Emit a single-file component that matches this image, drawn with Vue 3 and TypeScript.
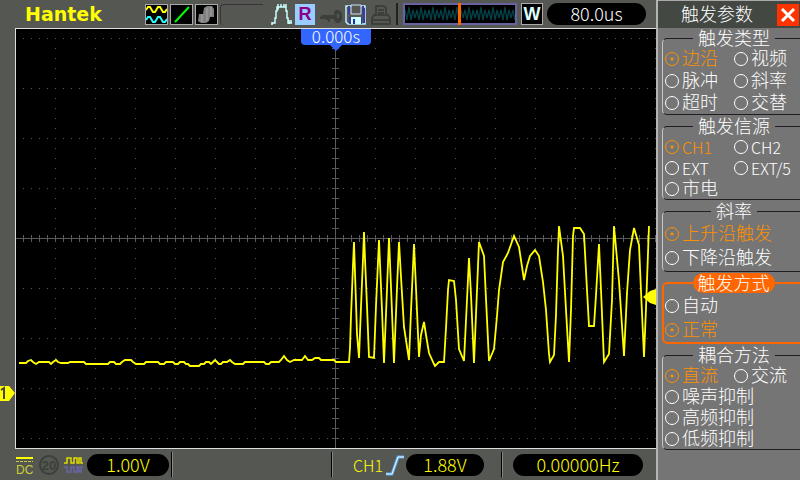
<script setup lang="ts">
import { reactive } from 'vue'

interface Group {
  id: string
  title: string
  options: string[]
  density: string
  active?: boolean
}

const groups: Group[] = [
  { id: 'type', title: '触发类型', options: ['边沿', '视频', '脉冲', '斜率', '超时', '交替'], density: 'medium' },
  { id: 'source', title: '触发信源', options: ['CH1', 'CH2', 'EXT', 'EXT/5', '市电'], density: 'dense' },
  { id: 'slope', title: '斜率', options: ['上升沿触发', '下降沿触发'], density: 'roomy' },
  { id: 'mode', title: '触发方式', options: ['自动', '正常'], density: 'roomy', active: true },
  { id: 'coupling', title: '耦合方法', options: ['直流', '交流', '噪声抑制', '高频抑制', '低频抑制'], density: 'dense' },
]

const selected = reactive<Record<string, string>>({
  type: '边沿',
  source: 'CH1',
  slope: '上升沿触发',
  mode: '正常',
  coupling: '直流',
})

/* Long labels, and both slope and mode choices, take a whole row. */
const isWide = (group: Group, option: string) =>
  group.density === 'roomy' || (group.id === 'coupling' && option.length > 3)

const isLatin = (text: string) => /^[A-Z0-9/]+$/.test(text)

const rows = [38, 88, 138, 188, 288, 338, 388, 438]
const columns = [55, 95, 135, 175, 215, 255, 295, 375, 415, 455, 495, 535, 575, 615, 655]

const trace = [
  '19,363 26,363 28,361 31,360 33,362 36,364 39,362 49,362 51,364 53,362 56,360 58,362 61,363 68,363 70,362',
  '84,362 86,364 108,364 110,362 114,362 116,364 120,364 122,362 125,360 131,360 133,362 136,364 144,364',
  '146,362 158,362 160,364 164,364 166,362 173,362 175,364 178,364 180,362 184,362 186,364 188,364 190,366',
  '199,366 201,364 204,364 206,362 209,362 211,364 213,362 215,360 217,362 219,364 221,364 223,362 227,362',
  '230,360 232,362 235,364 243,364 245,362 264,362 266,364 269,364 271,362 279,362 281,360 284,356 287,360',
  '290,362 294,360 302,360 305,356 308,360 312,360 315,358 319,358 321,360 334,360 336,362 349,362',
  '350,348 351,316 352,291 353,265 354,242 357,334 359,358 361,307 363,259 364,232 365,259 367,306 369,357',
  '374,358 376,306 379,240 382,310 384,363 387,289 389,238 391,287 394,363 397,288 399,242 401,277 404,327',
  '409,360 411,311 414,244 416,288 419,357 421,335 424,322 426,335 429,353 434,364 435,366 439,362 444,362',
  '446,328 448,290 449,280 454,281 456,300 459,349 464,361 467,300 469,258 471,295 474,363 477,290 479,242',
  '484,256 486,299 489,361 494,349 497,316 499,290 503,262 508,253 514,236 519,247 524,280 527,266 530,256',
  '535,250 539,256 543,282 546,310 549,354 550,362 554,355 556,315 558,250 559,226 563,256 566,310 569,362',
  '571,310 573,236 574,228 580,228 584,234 587,290 589,326 594,326 596,295 599,244 601,290 604,362 609,354',
  '612,300 614,226 619,281 624,356 627,293 630,250 634,228 639,245 641,291 644,357 646,308 649,226',
].join(' ')
</script>

<template>
  <div class="scope">
    <main class="main">
      <header class="topbar">
        <h1 class="brand">Hantek</h1>
        <div class="tiles">
          <svg class="tile" viewBox="0 0 21 19" aria-hidden="true">
            <path d="M0 5l2-3h2l3 5h2l3-5h2l3 5h2l2-3" stroke="#ff0" />
            <path d="M0 15l2-3h2l3 5h2l3-5h2l3 5h2l2-3" stroke="#2ff" />
          </svg>
          <svg class="tile" viewBox="0 0 21 19" aria-hidden="true">
            <path d="M4 17L18 2" stroke="#0f0" />
          </svg>
          <svg class="tile" viewBox="0 0 21 19" aria-hidden="true">
            <path d="M8 3l3-2h5l2 3v8h-4l-1 4-3 2H5l-3-2 1-7h4z" fill="#808080" />
            <path d="M6 9v8M11 3v13M15 2v9" stroke="#a4a4a4" stroke-width="1" />
          </svg>
          <span class="slot"></span>
        </div>
        <div class="status">
          <svg width="22" height="22" viewBox="0 0 22 22" aria-hidden="true">
            <path d="M2 22v-3M2 20h3v-5h1V8h1V4h1M8 7V1M8 4h8M11 1v3M14 1v3M16 1v7h1v7h1v5h4M19 17v4M21 17v3" fill="none" stroke="#cff" stroke-width="1.5" />
          </svg>
          <span class="run">R</span>
          <svg width="24" height="22" viewBox="0 0 24 22" aria-hidden="true">
            <path d="M2 14l2-2h12V9l2-2h3l3 3v7l-3 3h-3l-2-3v-1h-4v3h-2v-2h-2v2H8v-3H2zM19 11v4h2v-4z" fill="#3c403a" fill-rule="evenodd" />
          </svg>
          <svg width="22" height="22" viewBox="0 0 22 22" aria-hidden="true">
            <path d="M1 3h19v18H3l-2-2z" fill="#555753" stroke="#bdf0ff" stroke-width="1.5" />
            <path d="M4 3v8M18 3v8M5 14v7M16 14v7M19 5v15" stroke="#3a3a9e" stroke-width="2" />
            <path d="M6 2h10v9H6z" fill="#555753" stroke="#cbe6ff" />
            <path d="M6 14h10v7H6z" fill="#cff" />
            <path d="M8 16h2v5H8z" fill="#222e9e" />
          </svg>
          <svg width="22" height="22" viewBox="0 0 22 22" aria-hidden="true">
            <path d="M6 12V3h8l2 2v7M8 7h6M8 10h6M4 12h14l2 3v6H2v-6zM3 17h16" fill="none" stroke="#3c403a" stroke-width="2" />
          </svg>
        </div>
        <svg class="preview" viewBox="0 0 114 22" preserveAspectRatio="none" aria-hidden="true">
          <defs>
            <pattern id="mini" width="12" height="22" patternUnits="userSpaceOnUse">
              <path d="M0 15l2-8 2 10 2-13 2 13 2-10 2 8" fill="none" stroke="#053e44" stroke-width="1.4" />
            </pattern>
          </defs>
          <rect x="1" y="1" width="112" height="20" fill="#000" stroke="#6663a0" stroke-width="2" />
          <rect x="2" y="2" width="110" height="18" fill="url(#mini)" />
          <rect x="55" y="0" width="3" height="22" fill="#f60" />
        </svg>
        <span class="window">W</span>
        <output class="pill timebase">80.0us</output>
      </header>

      <section class="screen">
        <div class="gutter">
          <svg class="channel" width="15" height="15" viewBox="0 0 15 15" aria-hidden="true">
            <path d="M0 0h9l6 7-6 8H0z" fill="#ff0" />
            <path d="M1 4l3-2v11" fill="none" stroke="#444" stroke-width="2" />
          </svg>
        </div>
        <div class="plot">
          <svg class="graph" viewBox="16 29 640 419" preserveAspectRatio="none" role="img" aria-label="CH1">
            <g class="grid">
              <line v-for="y in rows" :key="'r' + y" x1="23" x2="656" :y1="y + 0.5" :y2="y + 0.5" stroke-dasharray="1 7" />
              <line v-for="x in columns" :key="'c' + x" :x1="x + 0.5" :x2="x + 0.5" y1="48" y2="446" stroke-dasharray="1 9" />
              <line x1="16" x2="656" y1="238.5" y2="238.5" />
              <line x1="335.5" x2="335.5" y1="29" y2="448" />
              <line class="ticks" x1="23" x2="656" y1="238.5" y2="238.5" stroke-dasharray="1 7" />
              <line class="ticks" x1="335.5" x2="335.5" y1="48" y2="448" stroke-dasharray="1 9" />
            </g>
            <polyline class="trace" :points="trace" />
            <path d="M656 289l-6 2-7 6 7 6 6 2z" fill="#ff0" />
          </svg>
          <output class="marker">0.000s</output>
        </div>
      </section>

      <footer class="bottombar">
        <div class="cell channel-cell">
          <svg width="20" height="22" viewBox="0 0 20 22" aria-hidden="true">
            <path d="M1 4h17" stroke="#ff0" stroke-width="2" />
            <path d="M1 7.500h17" stroke="#cc3" stroke-dasharray="3 1" />
            <text x="1" y="20" class="dc">DC</text>
          </svg>
          <svg width="20" height="22" viewBox="0 0 20 22" aria-hidden="true">
            <circle cx="10" cy="11" r="9" fill="none" stroke="#3c403a" stroke-width="2" />
            <text x="10" y="16" class="limit">20</text>
          </svg>
          <svg width="20" height="22" viewBox="0 0 20 22" aria-hidden="true">
            <path d="M1 9h3V4h4v5h3V4h3v5h2V4h2v5h2" fill="none" stroke="#dd0" stroke-width="1.5" />
            <path d="M1 13h3v5h4v-5h3v5h3v-5h2v5h2v-5h2" fill="none" stroke="#6865a8" stroke-width="1.5" />
          </svg>
          <output class="pill volts">1.00V</output>
        </div>
        <div class="cell blank"></div>
        <div class="cell trigger">
          <span class="source latin">CH1</span>
          <svg width="20" height="22" viewBox="0 0 20 22" aria-hidden="true">
            <path d="M1 20h6l6-17h6" fill="none" stroke="#6ae" stroke-width="3" />
            <path d="M1 20h6l6-17h6" fill="none" stroke="#dff" />
          </svg>
          <output class="pill level">1.88V</output>
        </div>
        <div class="cell frequency">
          <output class="pill">0.00000Hz</output>
        </div>
      </footer>
    </main>

    <aside class="panel">
      <header class="panel-head">
        <h2>触发参数</h2>
        <button type="button" class="close" aria-label="关闭">
          <svg width="22" height="22" viewBox="0 0 22 22" aria-hidden="true">
            <path d="M5 5l12 12M17 5L5 17" stroke="#fff" stroke-width="3" />
          </svg>
        </button>
      </header>
      <form class="groups">
        <fieldset v-for="group in groups" :key="group.id" class="group" :class="[group.density, { active: group.active }]">
          <legend>{{ group.title }}</legend>
          <div class="options">
            <label
              v-for="option in group.options"
              :key="option"
              class="option"
              :class="{ wide: isWide(group, option), chosen: selected[group.id] === option, latin: isLatin(option) }"
            >
              <input v-model="selected[group.id]" type="radio" :name="group.id" :value="option" />
              <span>{{ option }}</span>
            </label>
          </div>
        </fieldset>
      </form>
    </aside>
  </div>
</template>

<style>
body {
  background: #555753;
}
</style>

<style scoped>
* {
  box-sizing: border-box;
}

.scope {
  display: flex;
  min-height: 100vh;
  overflow: hidden;
  background: #555753;
  color: #fff;
  font-family: "Noto Sans CJK SC", sans-serif;
  font-size: 18px;
  font-weight: 300;
  line-height: 20px;
}

svg {
  display: block;
  flex: none;
}

.main {
  display: flex;
  flex: 1;
  flex-direction: column;
  min-width: 0;
}

.topbar {
  display: flex;
  align-items: center;
  height: 28px;
  padding: 0 10px 0 25px;
}

.brand {
  width: 120px;
  margin: 0;
  color: #ff0;
  font: bold 19px/22px "DejaVu Sans", sans-serif;
}

.tiles {
  display: flex;
  gap: 2px;
}

.tile {
  width: 23px;
  height: 21px;
  border: 1px solid #aaa;
  background: #000;
  fill: none;
  stroke-width: 2;
}

.slot {
  width: 43px;
  border-top: 1px solid #3a3438;
  border-left: 1px solid #3a3438;
  border-radius: 4px 0 0 4px;
}

.status {
  display: flex;
  gap: 3px;
  align-items: center;
  margin-left: 7px;
  padding-right: 4px;
  border-right: 2px solid #222;
}

.run,
.window {
  font-family: "Liberation Sans", sans-serif;
  font-weight: bold;
  line-height: 21px;
  text-align: center;
}

.run {
  width: 20px;
  height: 21px;
  background: #9cf;
  color: #808;
}

.preview {
  flex: 1;
  min-width: 0;
  height: 22px;
  margin: 0 4px 0 5px;
}

.window {
  width: 22px;
  height: 22px;
  margin-right: 4px;
  border: 1px solid #aaa;
  background: #000;
  color: #dff;
}

.pill {
  display: block;
  height: 22px;
  border-radius: 11px;
  background: #000;
  text-align: center;
}

.timebase {
  width: 99px;
}

.screen {
  display: flex;
  flex: 1;
}

.gutter {
  position: relative;
  width: 15px;
}

.channel {
  position: absolute;
  top: 85%;
  left: 0;
}

.plot {
  position: relative;
  flex: 1;
  min-width: 0;
  border: 1px solid #ddd;
  border-right: 0;
  background: #000;
}

.graph {
  position: absolute;
  width: 100%;
  height: 100%;
}

.grid {
  stroke: #5a5a5a;
  shape-rendering: crispEdges;
}

.ticks {
  stroke-width: 7;
}

.trace {
  fill: none;
  stroke: #ff0;
  stroke-width: 1.8;
}

.marker {
  position: absolute;
  top: 0;
  left: 50%;
  width: 70px;
  height: 16px;
  border-radius: 0 0 4px 4px;
  background: #36f;
  font-size: 17px;
  line-height: 14px;
  text-align: center;
  transform: translateX(-50%);
}

.marker::after {
  position: absolute;
  top: 100%;
  left: 50%;
  border: 6px solid transparent;
  border-top-color: #36f;
  border-bottom: 0;
  content: "";
  transform: translateX(-50%);
}

.bottombar {
  display: flex;
  align-items: center;
  height: 31px;
  color: #ff0;
}

.cell {
  display: flex;
  flex: none;
  align-items: center;
  height: 25px;
}

.cell + .cell {
  border-left: 1px solid #000;
  box-shadow: inset 1px 0 #888;
}

.channel-cell {
  gap: 4px;
  width: 171px;
  padding-left: 15px;
}

.blank {
  width: 160px;
}

.trigger {
  gap: 1px;
  width: 170px;
  padding-left: 21px;
}

.source {
  width: 31px;
}

.frequency {
  flex: 1;
  padding: 0 13px 0 11px;
}

.frequency .pill {
  flex: 1;
}

.volts {
  width: 82px;
}

.level {
  width: 78px;
}

.dc {
  fill: #cc3;
  font-family: "Liberation Sans", sans-serif;
  font-size: 12px;
}

.limit {
  fill: #3c403a;
  font-family: "Liberation Sans", sans-serif;
  font-size: 13px;
  font-weight: bold;
  text-anchor: middle;
}

.panel {
  width: 144px;
  overflow: hidden;
  border-left: 2px solid #b4b4b4;
  background: #757575;
  font-family: "Liberation Sans", "Noto Sans CJK SC", sans-serif;
}

.latin {
  font-family: "Noto Sans CJK SC", sans-serif;
  font-size: 16px;
}

.panel-head {
  display: flex;
  align-items: center;
  justify-content: space-between;
  height: 28px;
  padding: 0 1px 0 23px;
  border-top: 1px solid #aaa;
  background: #434843;
}

.panel-head h2 {
  margin: 0;
  font-size: 18px;
  font-weight: 300;
}

.close {
  padding: 0;
  border: 0;
  background: #f30;
}

.groups {
  display: flex;
  flex-direction: column;
  gap: 1px;
}

.group {
  min-width: 0;
  margin: 0 -4px 0 4px;
  padding: 0 0 0 2px;
  border: 1px solid #241c24;
  border-left-color: #c4c4c4;
  border-radius: 5px;
}

.group legend {
  height: 20px;
  margin: 0 auto;
  padding: 0 5px;
  line-height: 22px;
}

.group.active {
  padding-left: 1px;
  border: 2px solid #f60;
}

.active legend {
  border-radius: 10px;
  background: #f60;
}

.options {
  display: grid;
  grid-template-columns: 69px 1fr;
  grid-auto-rows: 21px;
}

.medium .options {
  grid-auto-rows: 22px;
}

.roomy .options {
  grid-auto-rows: 24px;
  padding: 1px 0;
}

.active .options {
  padding-bottom: 0;
}

.option {
  display: flex;
  gap: 3px;
  align-items: center;
  white-space: nowrap;
}

.wide {
  grid-column: 1 / -1;
}

.chosen {
  color: #ff9000;
}

.option input {
  flex: none;
  width: 14px;
  height: 14px;
  margin: 0;
  border: 1px solid currentColor;
  border-radius: 50%;
  appearance: none;
  color: inherit;
}

.option input:checked {
  background: radial-gradient(circle, currentColor 0 1px, transparent 2px);
}
</style>
